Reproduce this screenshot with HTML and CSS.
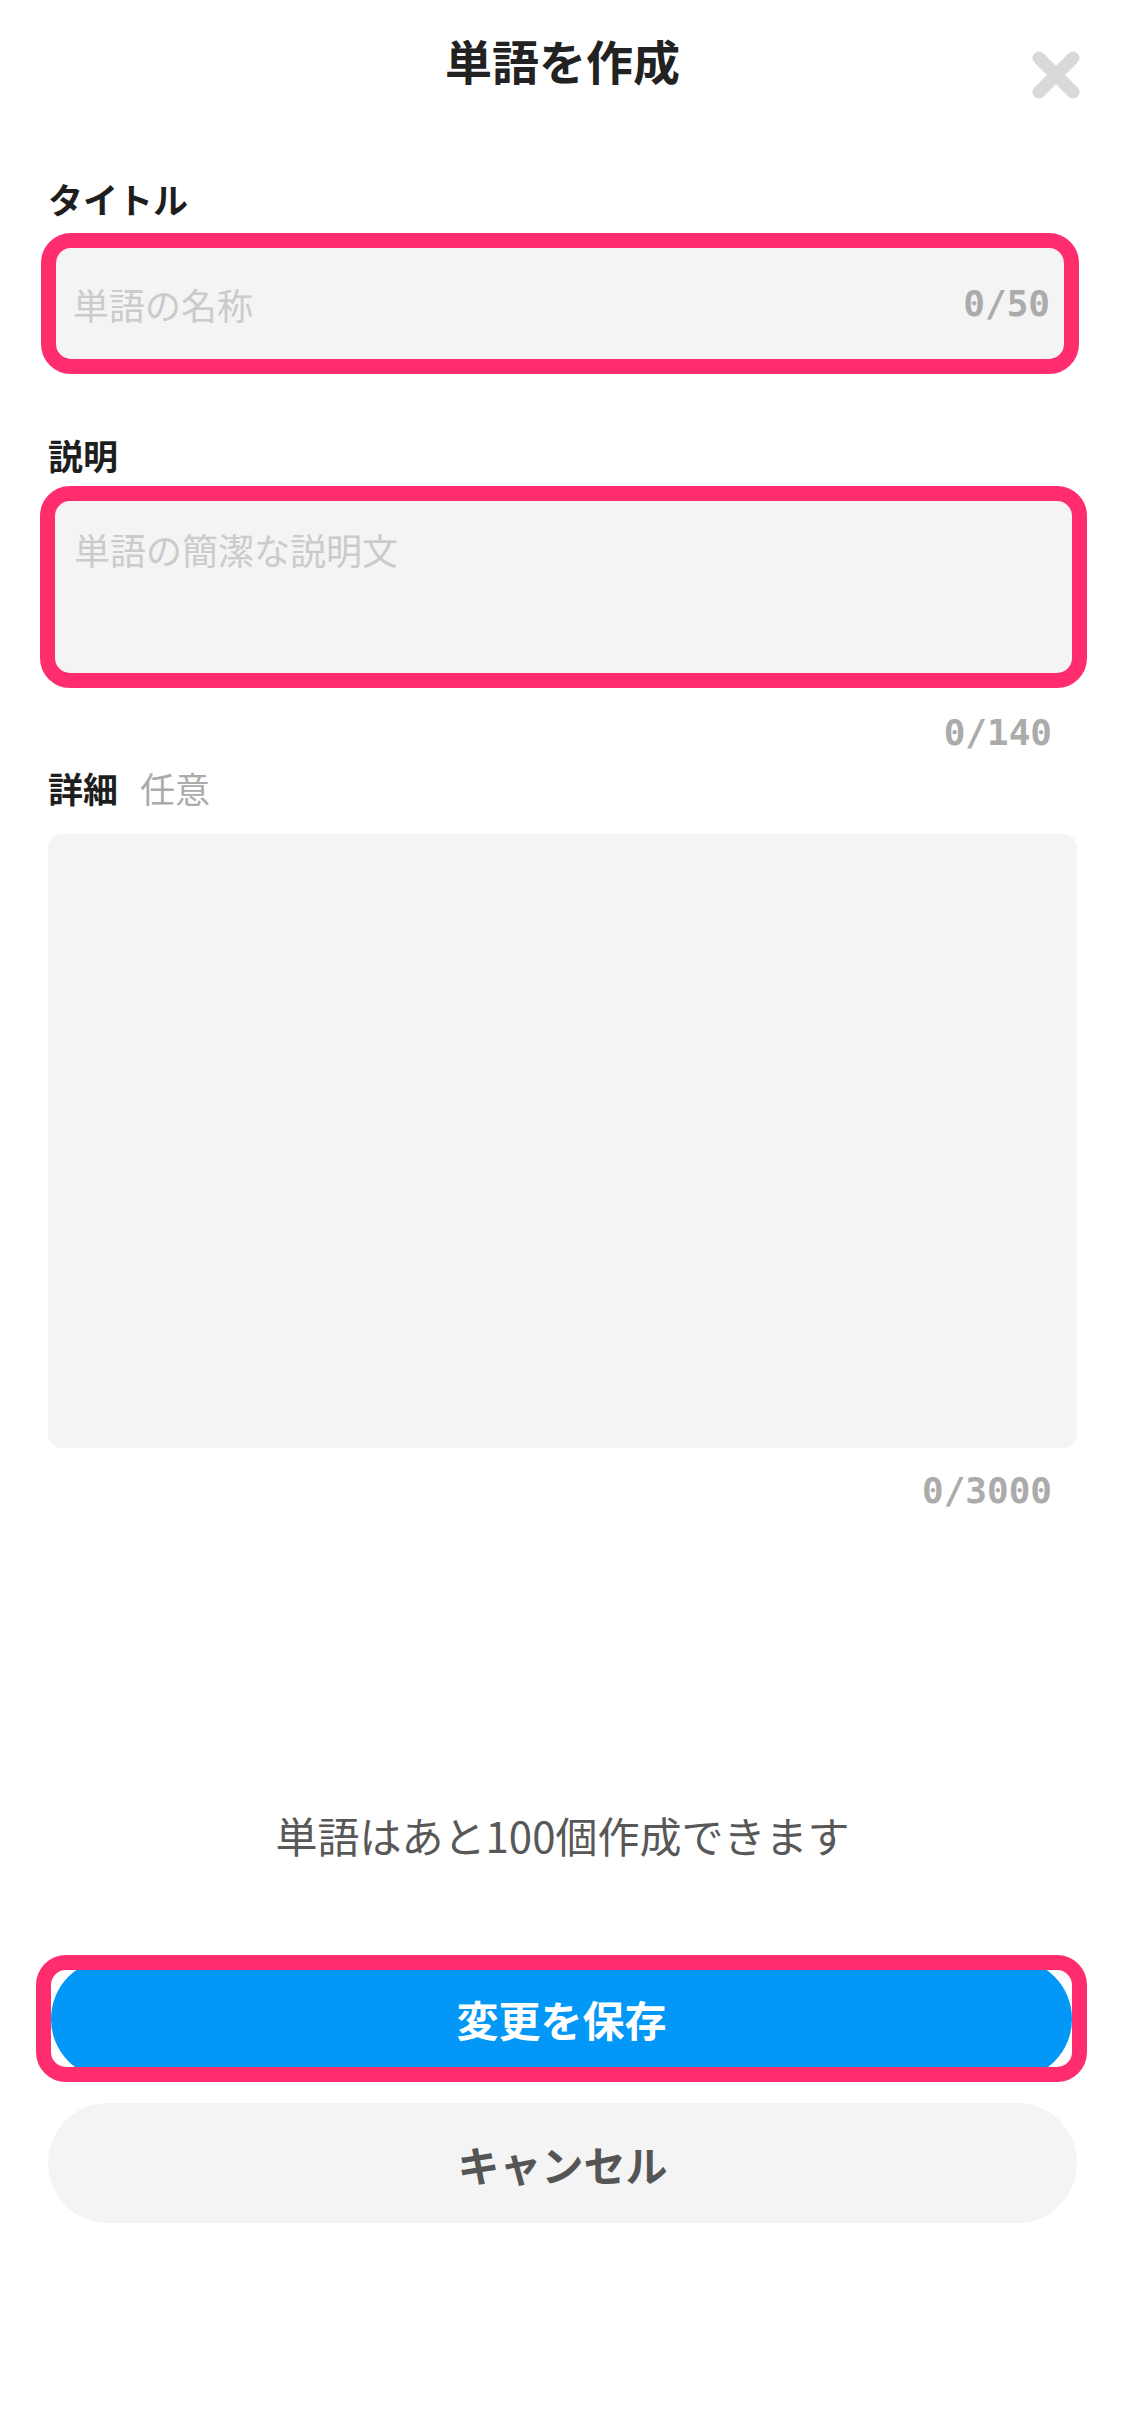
FILE: index.html
```html
<!DOCTYPE html>
<html lang="ja">
<head>
<meta charset="utf-8">
<title>単語を作成</title>
<link rel="stylesheet" href="styles.css">
</head>
<body>
<div class="page">
  <header class="header">
    <span class="spacer"></span>
    <h1 class="title">単語を作成</h1>
    <button class="close" aria-label="閉じる">
      <svg width="48" height="48" viewBox="0 0 48 48"><path d="M7 7 L41 41 M41 7 L7 41" stroke="#d9d9d9" stroke-width="13" stroke-linecap="round" fill="none"/></svg>
    </button>
  </header>

  <div class="label label-first">タイトル</div>
  <div class="field field-title">
    <span class="placeholder">単語の名称</span>
    <span class="count">0/50</span>
  </div>

  <div class="label label-desc">説明</div>
  <div class="field field-desc">
    <span class="placeholder">単語の簡潔な説明文</span>
  </div>
  <div class="count count-below count-desc">0/140</div>

  <div class="label label-detail">詳細<span class="optional">任意</span></div>
  <div class="detail-area"></div>
  <div class="count count-below count-detail">0/3000</div>

  <p class="info">単語はあと100個作成できます</p>

  <div class="save-wrap">
    <button class="btn btn-save">変更を保存</button>
  </div>
  <button class="btn btn-cancel">キャンセル</button>
</div>
</body>
</html>
```

FILE: styles.css
```css
* { box-sizing: border-box; }
html, body {
  margin: 0;
  padding: 0;
  background: #ffffff;
}
body {
  font-family: "Noto Sans CJK JP", "Noto Sans", sans-serif;
  color: #222222;
}
.page {
  width: 1125px;
  padding: 0 48px 0 48px;
  display: flex;
  flex-direction: column;
}
.header {
  height: 120px;
  display: grid;
  grid-template-columns: 1fr auto 1fr;
  align-items: start;
}
.title {
  margin: 0;
  font-size: 47px;
  font-weight: 700;
  line-height: 120px;
  color: #222222;
  letter-spacing: 0;
}
.close {
  justify-self: end;
  margin: 51px -3px 0 0;
  padding: 0;
  border: 0;
  background: none;
  width: 48px;
  height: 48px;
  display: block;
}
.close svg { display: block; }

.label {
  font-size: 35px;
  font-weight: 700;
  line-height: 50px;
  color: #1e1e1e;
  display: flex;
  align-items: center;
}
.label-first { margin-top: 54px; }
.label-desc { margin-top: 56px; }
.label-detail { margin-top: 5px; }
.optional {
  font-weight: 400;
  color: #ababab;
  margin-left: 22px;
}

.field {
  background: #f4f4f4;
  border: 15px solid #ff2d6e;
  border-radius: 30px;
}
.field-title {
  margin: 9px -2px 0 -7px;
  height: 141px;
  display: flex;
  align-items: center;
  justify-content: space-between;
  padding: 0 14px 0 17px;
}
.field-desc {
  margin: 6px -10px 0 -8px;
  height: 202px;
  padding: 23px 18px 0 19px;
}
.placeholder {
  font-size: 36px;
  line-height: 50px;
  color: #cbcbcb;
}
.count {
  font-family: "DejaVu Sans Mono", "Liberation Mono", monospace;
  font-weight: 700;
  font-size: 36px;
  line-height: 50px;
  color: #ababab;
}
.count-below {
  text-align: right;
  padding-right: 25px;
}
.count-desc { margin-top: 20px; }
.detail-area {
  margin-top: 21px;
  height: 614px;
  background: #f4f4f4;
  border-radius: 14px;
}
.count-detail { margin-top: 18px; }

.info {
  margin: 289px 0 0 0;
  text-align: center;
  font-size: 42px;
  line-height: 60px;
  color: #585858;
}

.save-wrap {
  margin: 90px -10px 0 -12px;
  height: 127px;
  border: 15px solid #ff2d6e;
  border-radius: 30px;
  background: #ffffff;
  overflow: hidden;
  display: flex;
  align-items: center;
}
.btn {
  display: block;
  width: 100%;
  border: 0;
  padding: 0;
  font-family: "Noto Sans CJK JP", "Noto Sans", sans-serif;
  font-size: 42px;
  font-weight: 700;
  border-radius: 60px;
  height: 120px;
  flex-shrink: 0;
}
.btn-save {
  background: #0398f7;
  color: #ffffff;
  margin: 0 -2px 0 0;
}
.btn-cancel {
  margin-top: 21px;
  background: #f4f4f4;
  color: #555555;
}
```
